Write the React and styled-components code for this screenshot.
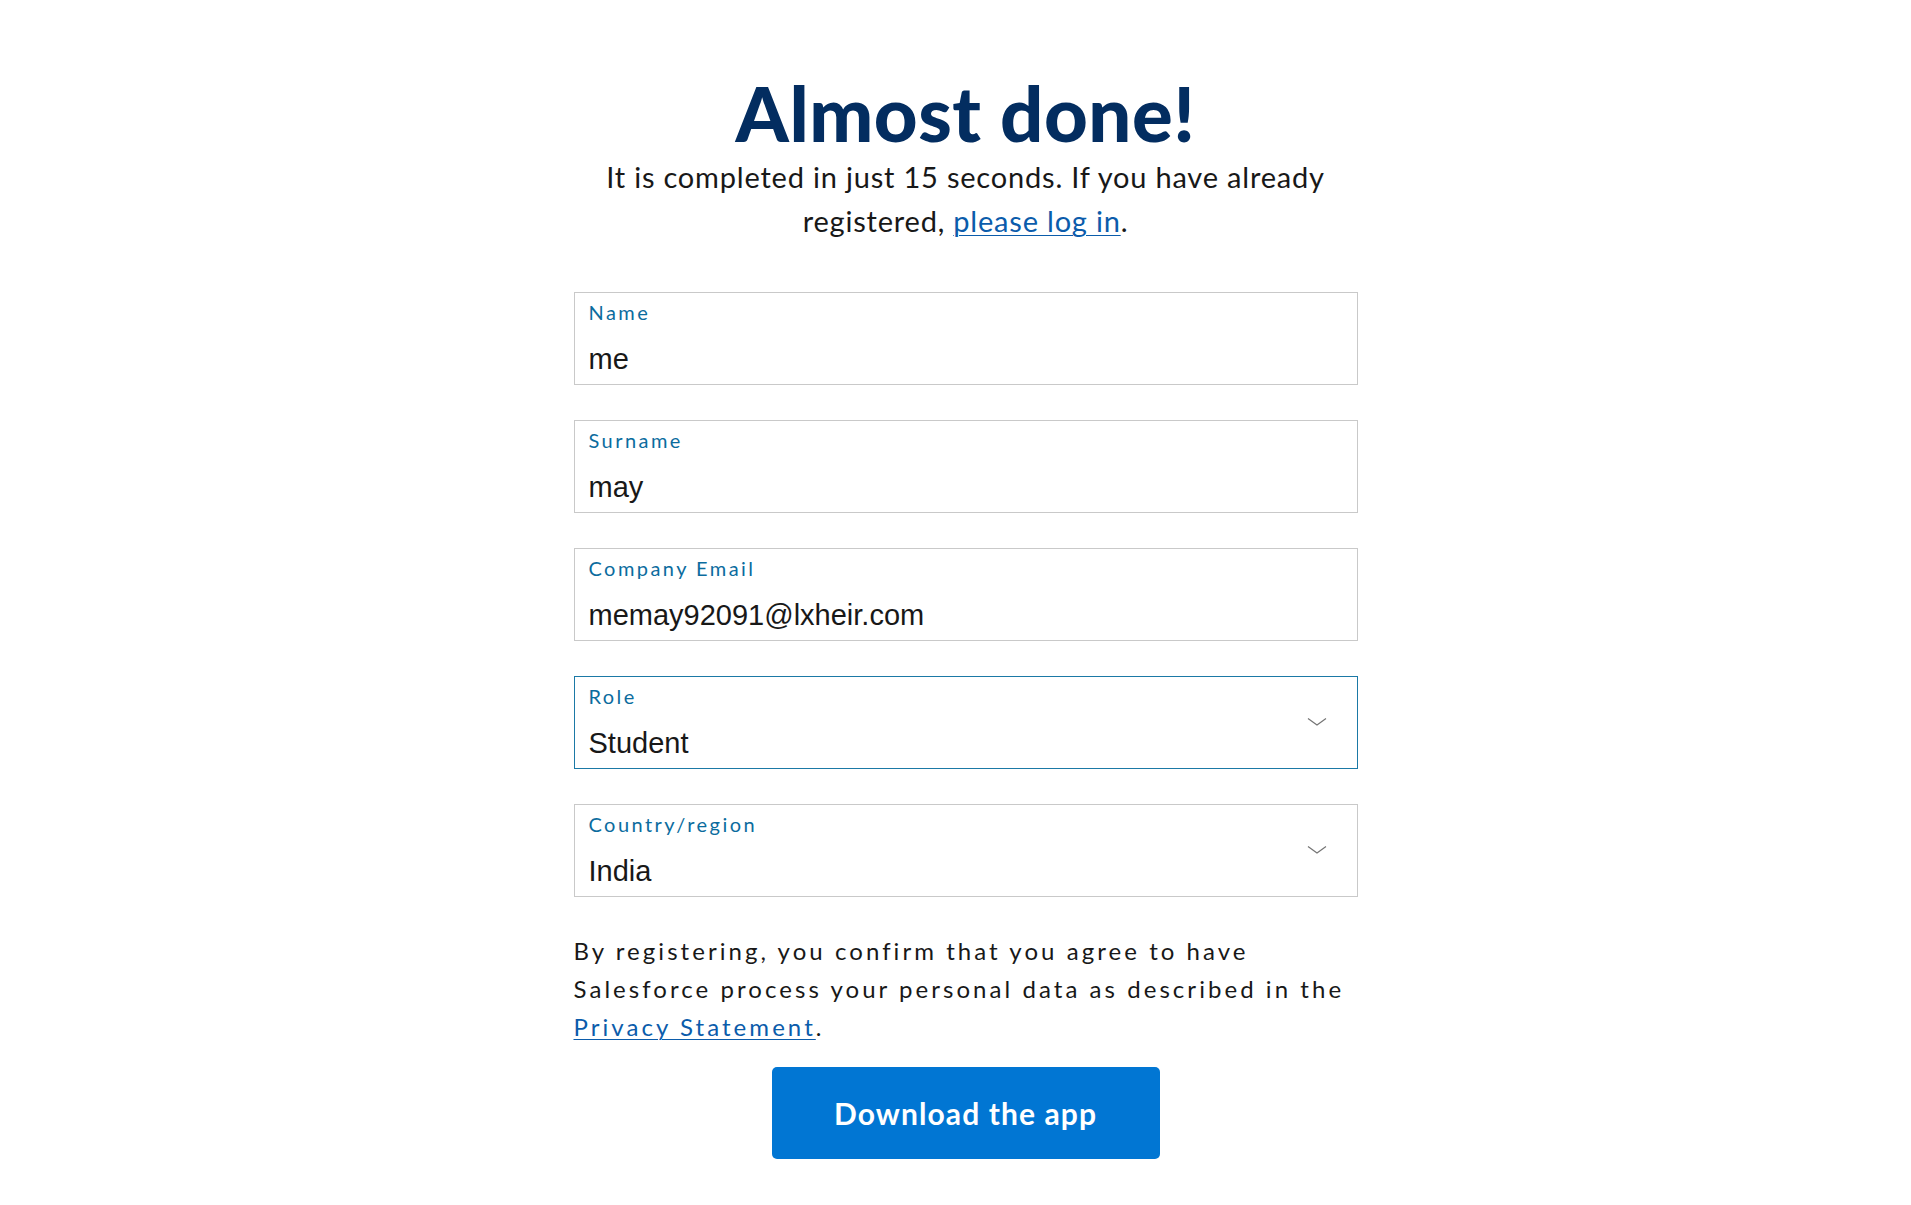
import React from "react";
import styled, { createGlobalStyle } from "styled-components";

const Global = createGlobalStyle`
  html, body { margin: 0; padding: 0; background: #ffffff; }
  body { font-family: "Lato", "Open Sans", sans-serif; color: #181818; }
  * { box-sizing: border-box; }
`;

const Page = styled.main`
  display: flex;
  justify-content: center;
  padding: 71px 0 40px 20px;
`;

const Column = styled.div`
  width: 784px;
  display: flex;
  flex-direction: column;
  align-items: stretch;
`;

const Title = styled.h1`
  margin: 0;
  text-align: center;
  font-family: "Lato", sans-serif;
  font-weight: 900;
  font-size: 76px;
  line-height: 84px;
  letter-spacing: 0.5px;
  color: #032d60;
`;

const Lead = styled.p`
  margin: 0 0 49px;
  text-align: center;
  font-size: 29px;
  line-height: 44px;
  letter-spacing: 0.8px;
  color: #181818;
`;

const Link = styled.a`
  color: #0b5cab;
  text-decoration: underline;
  text-underline-offset: 3px;
  text-decoration-thickness: 1px;
`;

const Form = styled.form`
  display: flex;
  flex-direction: column;
  gap: 35px;
`;

const Field = styled.label`
  position: relative;
  display: flex;
  flex-direction: column;
  height: 93px;
  padding: 8px 14px 0;
  border: 1px solid ${(p) => (p.$focused ? "#1b79a6" : "#c9c9c9")};
  background: #fff;
`;

const FieldLabel = styled.span`
  font-family: "Lato", sans-serif;
  font-size: 20px;
  line-height: 22px;
  letter-spacing: 2.45px;
  color: #0b6c9e;
`;

const Value = styled.span`
  margin-top: 19px;
  font-family: "Liberation Sans", Arial, sans-serif;
  font-size: 29px;
  line-height: 34px;
  color: #181818;
`;

const Chevron = styled.svg`
  position: absolute;
  right: 30px;
  top: 40px;
  width: 20px;
  height: 10px;
`;

const Consent = styled.p`
  margin: 35px 0 0;
  font-size: 24px;
  line-height: 38px;
  letter-spacing: 3.05px;
  white-space: nowrap;
  color: #181818;
`;

const Actions = styled.div`
  display: flex;
  justify-content: center;
  margin-top: 21px;
`;

const Button = styled.button`
  width: 388px;
  height: 92px;
  border: none;
  border-radius: 5px;
  background: #0176d3;
  color: #fff;
  font-family: "Lato", sans-serif;
  font-weight: 700;
  font-size: 30px;
  letter-spacing: 1.1px;
  cursor: pointer;
`;

const fields = [
  { label: "Name", value: "me" },
  { label: "Surname", value: "may" },
  { label: "Company Email", value: "memay92091@lxheir.com" },
  { label: "Role", value: "Student", select: true, focused: true },
  { label: "Country/region", value: "India", select: true },
];

export default function App() {
  return (
    <>
      <Global />
      <Page>
        <Column>
          <Title>Almost done!</Title>
          <Lead>
            It is completed in just 15 seconds. If you have already
            <br />
            registered, <Link href="#">please log in</Link>.
          </Lead>
          <Form onSubmit={(e) => e.preventDefault()}>
            {fields.map((f) => (
              <Field key={f.label} $focused={f.focused}>
                <FieldLabel>{f.label}</FieldLabel>
                <Value>{f.value}</Value>
                {f.select && (
                  <Chevron viewBox="0 0 20 10" fill="none">
                    <path d="M1 1.5 L10 8 L19 1.5" stroke="#747474" strokeWidth="1.2" />
                  </Chevron>
                )}
              </Field>
            ))}
          </Form>
          <Consent>
            By registering, you confirm that you agree to have
            <br />
            Salesforce process your personal data as described in the
            <br />
            <Link href="#">Privacy Statement</Link>.
          </Consent>
          <Actions>
            <Button type="button">Download the app</Button>
          </Actions>
        </Column>
      </Page>
    </>
  );
}
